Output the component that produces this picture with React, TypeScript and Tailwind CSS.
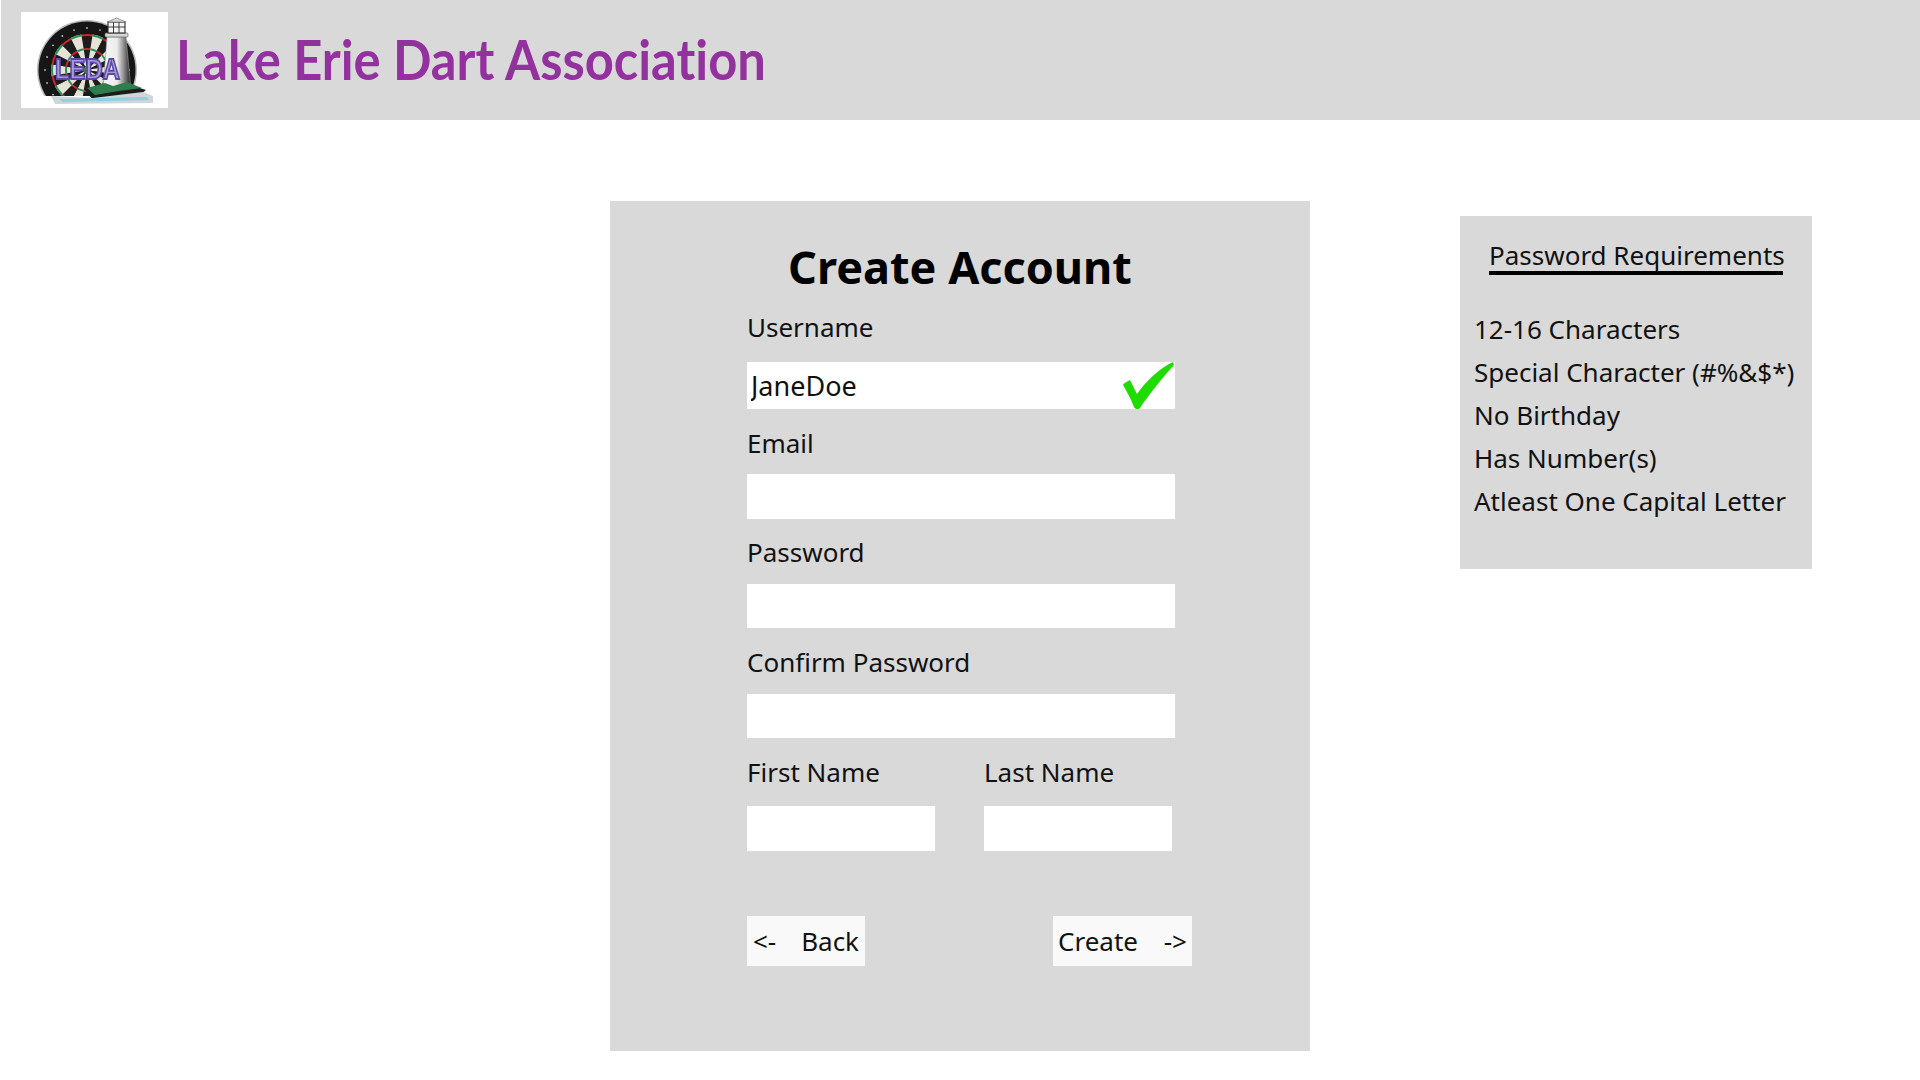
const CX = 66;
const CY = 58;

const polar = (r: number, deg: number) => {
  const a = ((deg - 90) * Math.PI) / 180;
  return `${(CX + r * Math.cos(a)).toFixed(2)} ${(CY + r * Math.sin(a)).toFixed(2)}`;
};

const wedge = (r0: number, r1: number, from: number, to: number) =>
  `M${polar(r0, from)} L${polar(r1, from)} A${r1} ${r1} 0 0 1 ${polar(r1, to)} L${polar(r0, to)} A${r0} ${r0} 0 0 0 ${polar(r0, from)} Z`;

const segments = Array.from({ length: 20 }, (_, i) => i);

const Logo = () => (
  <svg viewBox="0 0 147 96" className="block h-[96px] w-[147px]">
    <defs>
      <filter id="soft" x="-5%" y="-5%" width="110%" height="110%">
        <feGaussianBlur stdDeviation="0.5" />
      </filter>
      <linearGradient id="tower" x1="0" x2="1" y1="0" y2="0">
        <stop offset="0" stopColor="#f7f7f7" />
        <stop offset="0.5" stopColor="#ececec" />
        <stop offset="0.75" stopColor="#8a8a8a" />
        <stop offset="1" stopColor="#1c1c1c" />
      </linearGradient>
    </defs>
    <rect width="147" height="96" fill="#fff" />
    <g filter="url(#soft)">
      <circle cx={CX} cy={CY} r="50" fill="#b9b9b9" />
      <circle cx={CX} cy={CY} r="48.5" fill="#151515" />
      {segments.map((i) => {
        const from = i * 18 - 9;
        const to = from + 18;
        const dark = i % 2 === 0;
        const dot = polar(42, from + 9).split(" ");
        return (
          <g key={i}>
            <path d={wedge(4, 36, from, to)} fill={dark ? "#1b1b1b" : "#e6e2d6"} />
            <path d={wedge(20, 22, from, to)} fill={dark ? "#c9262c" : "#2f8f5b"} />
            <path d={wedge(34, 36, from, to)} fill={dark ? "#c9262c" : "#2f8f5b"} />
            <circle cx={Number(dot[0])} cy={Number(dot[1])} r="0.9" fill="#bdbdbd" />
          </g>
        );
      })}
      <circle cx={CX} cy={CY} r="3.5" fill="#2f8f5b" />
      <circle cx={CX} cy={CY} r="1.6" fill="#c9262c" />

      {/* white cut-out below the board */}
      <path d="M22 84 H136 V96 H22 Z" fill="#fff" />

      {/* lighthouse */}
      <path d="M86 25 L105 25 L110 78 L82 78 Z" fill="url(#tower)" stroke="#9a9a9a" strokeWidth="0.6" />
      <rect x="84" y="21" width="23" height="4" rx="1" fill="#d6d6d6" stroke="#666" strokeWidth="0.7" />
      <rect x="87" y="10" width="17" height="11" fill="#f4f4f4" stroke="#2a2a2a" strokeWidth="1.1" />
      <path d="M92.500 10 V21 M98 10 V21 M87 15 H104" stroke="#2a2a2a" strokeWidth="0.9" />
      <path d="M86 10 L95.500 6 L105 10 Z" fill="#d9d9d9" stroke="#777" strokeWidth="0.7" />

      {/* island and water */}
      <path d="M64 78 L84 73 L92 76 L106 72 L125 78 L120 82 L96 84 L72 88 Z" fill="#1b1b1b" />
      <path d="M66 76 L84 71 L92 74 L106 70 L121 76 L98 79 L74 83 Z" fill="#2f7d4b" />
      <path d="M30 84 L72 86 L122 80 L132 84 L132 91 L34 92 Z" fill="#cfd6d8" />
      <path d="M38 87 L126 85 L128 88 L42 90 Z" fill="#8ed2dc" />

      {/* letters */}
      <text
        x="34"
        y="67"
        textLength="65"
        lengthAdjust="spacingAndGlyphs"
        fontFamily="'Liberation Sans', sans-serif"
        fontWeight="700"
        fontSize="29"
        fill="#a99cd6"
        stroke="#5a48a8"
        strokeWidth="1.8"
      >
        LEDA
      </text>
    </g>
  </svg>
);

const Field = ({
  label,
  labelClass,
  inputClass,
  value,
}: {
  label: string;
  labelClass: string;
  inputClass: string;
  value?: string;
}) => (
  <>
    <label className={`block h-8 text-[26px] leading-8 text-[#111] ${labelClass}`}>{label}</label>
    <input
      readOnly
      defaultValue={value}
      className={`block w-[428px] bg-white pl-1 text-[27px] text-[#111] outline-none ${inputClass}`}
    />
  </>
);

const requirements = [
  "12-16 Characters",
  "Special Character (#%&$*)",
  "No Birthday",
  "Has Number(s)",
  "Atleast One Capital Letter",
];

export default function App() {
  return (
    <div className="h-[1080px] w-[1920px] overflow-hidden bg-white font-['Noto_Sans',sans-serif]">
      <header className="ml-px flex h-[120px] items-center bg-[#d9d9d9] pl-5">
        <Logo />
        <h1 className="mb-[2px] ml-2 origin-left scale-x-[0.905] whitespace-nowrap font-['Lato',sans-serif] text-[56px] font-bold leading-none text-[#93329e] [font-variant-ligatures:none]">
          Lake Erie Dart Association
        </h1>
      </header>

      <main className="flex items-start pl-[610px] pt-[81px]">
        <section className="h-[850px] w-[700px] bg-[#d9d9d9] pt-[36px]">
          <h2 className="h-[60px] text-center text-[45px] font-bold leading-[60px] text-black">Create Account</h2>
          <div className="pl-[137px]">
            <div className="relative">
              <Field label="Username" labelClass="mt-[14px]" inputClass="mt-[19px] h-[47px]" value="JaneDoe" />
              <svg viewBox="0 0 51 47" className="absolute bottom-0 left-[376px] h-[47px] w-[51px]">
                <path
                  d="M0 23 C1 21 5 19 7 18 L14 32 C22 20 37 6 50 0 L51 3 C40 15 27 31 17 46 C15 48 12 47 11 45 C8 37 4 30 0 23 Z"
                  fill="#1fdc00"
                />
              </svg>
            </div>
            <Field label="Email" labelClass="mt-[18px]" inputClass="mt-[15px] h-[45px]" />
            <Field label="Password" labelClass="mt-[17px]" inputClass="mt-4 h-[44px]" />
            <Field label="Confirm Password" labelClass="mt-[18px]" inputClass="mt-4 h-[44px]" />

            <div className="mt-[18px] flex text-[26px] leading-8 text-[#111]">
              <div className="w-[237px]">
                <label className="block h-8">First Name</label>
                <input readOnly className="mt-[18px] block h-[45px] w-[188px] bg-white outline-none" />
              </div>
              <div>
                <label className="block h-8">Last Name</label>
                <input readOnly className="mt-[18px] block h-[45px] w-[188px] bg-white outline-none" />
              </div>
            </div>

            <div className="mt-[65px] flex text-[26px] text-[#111]">
              <button className="flex h-[50px] w-[118px] items-center justify-between bg-[#f8f9f8] px-[6px]">
                <span>&lt;-</span>
                <span>Back</span>
              </button>
              <button className="ml-[188px] flex h-[50px] w-[139px] items-center justify-between bg-[#f8f9f8] px-[5px]">
                <span>Create</span>
                <span>-&gt;</span>
              </button>
            </div>
          </div>
        </section>

        <aside className="ml-[150px] mt-[15px] h-[353px] w-[352px] bg-[#d9d9d9] pt-[24px] text-[26px] text-[#111]">
          <div className="mx-auto h-[35px] w-[294px] whitespace-nowrap border-b-4 border-black text-center leading-[30px]">
            Password Requirements
          </div>
          <ul className="mt-[33px] pl-[14px]">
            {requirements.map((item) => (
              <li key={item} className="h-[43px] whitespace-nowrap leading-[43px]">
                {item}
              </li>
            ))}
          </ul>
        </aside>
      </main>
    </div>
  );
}
